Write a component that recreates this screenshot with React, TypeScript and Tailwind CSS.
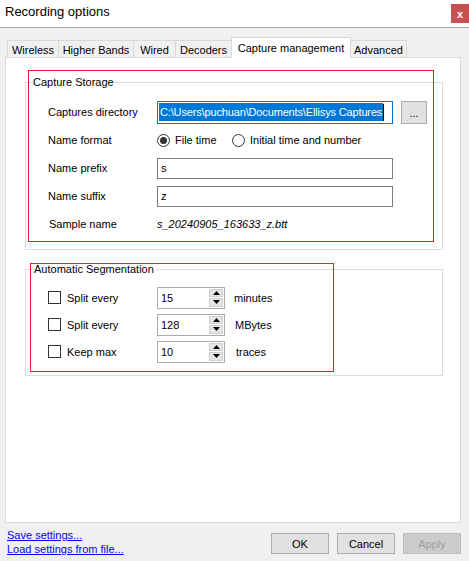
import React from 'react'

function Tab({ label, className }: { label: string; className: string }) {
  return (
    <div className={`flex items-center justify-center bg-[#f0f0f0] border-t border-[#d9d9d9] h-[17px] pt-[1px] ${className}`}>
      {label}
    </div>
  )
}

function Radio({ checked }: { checked?: boolean }) {
  return (
    <div className="w-[13px] h-[13px] rounded-full border border-[#333] bg-white flex items-center justify-center">
      {checked && <div className="w-[7px] h-[7px] rounded-full bg-[#333]" />}
    </div>
  )
}

function TextBox({ value }: { value: string }) {
  return (
    <div className="w-[236px] h-[21px] border border-[#7a7a7a] bg-white flex items-center pl-[3px]">
      {value}
    </div>
  )
}

function Spin({ value }: { value: string }) {
  return (
    <div className="w-[68px] h-[22px] border border-[#ababab] bg-white flex">
      <div className="flex-1 flex items-center pl-[3px]">{value}</div>
      <div className="w-[14px] my-[1px] mr-[1px] flex flex-col gap-[1px]">
        <div className="flex-1 bg-[#e5e5e5] border border-[#d0d0d0] flex items-center justify-center">
          <svg width="7" height="4" viewBox="0 0 7 4"><path d="M3.5 0 L7 4 L0 4 Z" fill="#000" /></svg>
        </div>
        <div className="flex-1 bg-[#e5e5e5] border border-[#d0d0d0] flex items-center justify-center">
          <svg width="7" height="4" viewBox="0 0 7 4"><path d="M0 0 L7 0 L3.5 4 Z" fill="#000" /></svg>
        </div>
      </div>
    </div>
  )
}

function SegRow({ label, value, unit, unitClass }: { label: string; value: string; unit: string; unitClass: string }) {
  return (
    <div className="h-[27px] flex items-center">
      <div className="w-[109px] flex items-center">
        <div className="w-[13px] h-[13px] border border-[#333] bg-white" />
        <span className="ml-[6px]">{label}</span>
      </div>
      <Spin value={value} />
      <span className={unitClass}>{unit}</span>
    </div>
  )
}

export default function App() {
  return (
    <div className="w-[469px] h-[561px] bg-[#f0f0f0] flex flex-col overflow-hidden text-[11px] leading-[14px] text-black font-['Liberation_Sans',Arial,sans-serif]">
      {/* title bar */}
      <div className="h-[28px] bg-white border-b border-[#a8a8a8] flex justify-between items-start">
        <span className="pl-[5px] pt-[4px] text-[13px] leading-[16px]">Recording options</span>
        <div className="mt-[4px] w-[18px] h-[19px] bg-[#c75050] text-white font-bold text-[11px] flex items-center justify-center">x</div>
      </div>

      {/* tabs */}
      <div className="mt-[9px] pl-[7px] h-[20px] flex items-end">
        <Tab label="Wireless" className="w-[51px] border-l" />
        <Tab label="Higher Bands" className="w-[75px] border-l" />
        <Tab label="Wired" className="w-[42px] border-l" />
        <Tab label="Decoders" className="w-[56px] border-l" />
        <div className="relative z-10 w-[120px] h-[21px] -mb-px bg-white border border-b-0 border-[#d9d9d9] flex justify-center pt-[3px]">
          Capture management
        </div>
        <Tab label="Advanced" className="w-[56px] border-r" />
      </div>

      {/* panel */}
      <div className="relative ml-[5px] w-[456px] h-[466px] bg-white border border-[#d9d9d9]">
        <div className="relative ml-[19px] mt-[24px] w-[418px] h-[168px] border border-[#dcdcdc] pl-[22px] pt-[15px]">
          <span className="absolute left-[6px] top-[-8px] bg-white px-[1px]">Capture Storage</span>
          <div className="h-[28px] flex items-center">
            <span className="w-[109px]">Captures directory</span>
            <div className="w-[236px] h-[23px] border border-[#0078d7] bg-white flex items-center pl-[1px]">
              <span className="h-[18px] bg-[#0078d7] text-white flex items-center pl-[1px] pr-[1px] tracking-[-0.15px] whitespace-nowrap">C:\Users\puchuan\Documents\Ellisys Captures</span>
              <span className="w-px h-[17px] bg-black" />
            </div>
            <div className="ml-[8px] w-[26px] h-[23px] bg-[#e1e1e1] border border-[#adadad] flex items-center justify-center pt-[2px]">...</div>
          </div>
          <div className="h-[28px] flex items-center">
            <span className="w-[109px]">Name format</span>
            <div className="w-[75px] flex items-center">
              <Radio checked />
              <span className="ml-[5px]">File time</span>
            </div>
            <Radio />
            <span className="ml-[5px]">Initial time and number</span>
          </div>
          <div className="h-[28px] flex items-center">
            <span className="w-[109px]">Name prefix</span>
            <TextBox value="s" />
          </div>
          <div className="h-[28px] flex items-center">
            <span className="w-[109px]">Name suffix</span>
            <TextBox value="z" />
          </div>
          <div className="h-[28px] flex items-center">
            <span className="w-[109px] pl-[1px]">Sample name</span>
            <span className="italic">s_20240905_163633_z.btt</span>
          </div>
        </div>

        <div className="relative ml-[19px] mt-[19px] w-[418px] h-[107px] border border-[#dcdcdc] pl-[22px] pt-[14px]">
          <span className="absolute left-[7px] top-[-8px] bg-white px-[1px]">Automatic Segmentation</span>
          <SegRow label="Split every" value="15" unit="minutes" unitClass="ml-[9px]" />
          <SegRow label="Split every" value="128" unit="MBytes" unitClass="ml-[10px]" />
          <SegRow label="Keep max" value="10" unit="traces" unitClass="ml-[11px]" />
        </div>

        {/* annotation rectangles */}
        <div className="absolute left-[22px] top-[12px] w-[406px] h-[172px] border border-[#ed1c24] pointer-events-none" />
        <div className="absolute left-[24px] top-[205px] w-[304px] h-[109px] border border-[#ed1c24] pointer-events-none" />
      </div>

      {/* footer */}
      <div className="flex justify-between">
        <div className="pl-[7px] pt-[5px] flex flex-col text-[#0000ff]">
          <span className="underline">Save settings...</span>
          <span className="underline">Load settings from file...</span>
        </div>
        <div className="pt-[10px] pr-[8px] flex gap-[8px]">
          <div className="w-[58px] h-[21px] bg-[#e1e1e1] border border-[#adadad] flex items-center justify-center">OK</div>
          <div className="w-[58px] h-[21px] bg-[#e1e1e1] border border-[#adadad] flex items-center justify-center">Cancel</div>
          <div className="w-[58px] h-[21px] bg-[#cccccc] border border-[#bfbfbf] text-[#a0a0a0] flex items-center justify-center">Apply</div>
        </div>
      </div>
    </div>
  )
}
